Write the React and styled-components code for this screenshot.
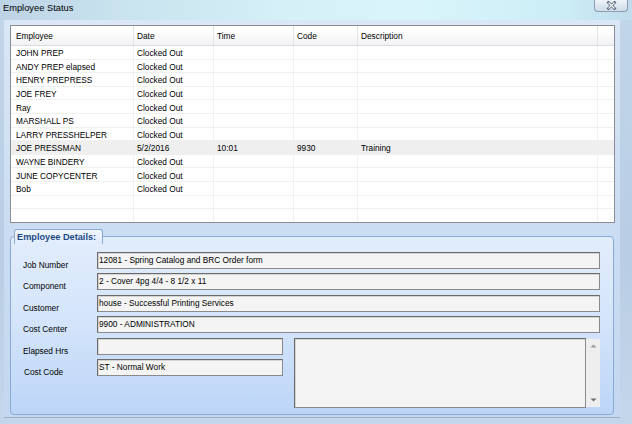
import React from 'react';
import styled, { createGlobalStyle } from 'styled-components';

const GlobalStyle = createGlobalStyle`
  html, body {
    margin: 0;
    padding: 0;
    overflow: hidden;
  }
  body {
    font-family: "Liberation Sans", Arial, sans-serif;
    font-size: 8.3px;
    color: #000;
  }
`;

const columns = [
  { key: 'employee', label: 'Employee', width: 123 },
  { key: 'date', label: 'Date', width: 80 },
  { key: 'time', label: 'Time', width: 80 },
  { key: 'code', label: 'Code', width: 64 },
  { key: 'description', label: 'Description', width: 240 },
];

const rows = [
  { employee: 'JOHN PREP', date: 'Clocked Out' },
  { employee: 'ANDY PREP elapsed', date: 'Clocked Out' },
  { employee: 'HENRY PREPRESS', date: 'Clocked Out' },
  { employee: 'JOE FREY', date: 'Clocked Out' },
  { employee: 'Ray', date: 'Clocked Out' },
  { employee: 'MARSHALL PS', date: 'Clocked Out' },
  { employee: 'LARRY PRESSHELPER', date: 'Clocked Out' },
  { employee: 'JOE PRESSMAN', date: '5/2/2016', time: '10:01', code: '9930', description: 'Training', selected: true },
  { employee: 'WAYNE BINDERY', date: 'Clocked Out' },
  { employee: 'JUNE COPYCENTER', date: 'Clocked Out' },
  { employee: 'Bob', date: 'Clocked Out' },
  {},
  {},
];

const details = [
  { label: 'Job Number', value: '12081 - Spring Catalog and BRC Order form' },
  { label: 'Component', value: '2 - Cover 4pg 4/4 - 8 1/2 x 11' },
  { label: 'Customer', value: 'house - Successful Printing Services' },
  { label: 'Cost Center', value: '9900 - ADMINISTRATION' },
];

const gridTemplate = columns.map(c => `${c.width}px`).join(' ') + ' 16px';

export default function App() {
  return (
    <>
      <GlobalStyle />
      <Window>
        <TitleBar>
          <Title>Employee Status</Title>
          <CloseButton>
            <svg width="11" height="9" viewBox="0 0 11 9">
              <path d="M2.5 1.5 L8.5 7.5 M8.5 1.5 L2.5 7.5" stroke="#56657a" strokeWidth="2.8" strokeLinecap="square" fill="none" />
              <path d="M2.5 1.5 L8.5 7.5 M8.5 1.5 L2.5 7.5" stroke="#ffffff" strokeWidth="1.1" fill="none" />
            </svg>
          </CloseButton>
        </TitleBar>
        <Client>
          <ListView>
            <HeaderRow>
              {columns.map((c, i) => (
                <HeaderCell key={c.key} $first={i === 0}>{c.label}</HeaderCell>
              ))}
              <HeaderCell $filler />
            </HeaderRow>
            {rows.map((r, idx) => (
              <Row key={idx} $selected={r.selected}>
                {columns.map((c, i) => (
                  <Cell key={c.key} $first={i === 0}>{r[c.key] || ''}</Cell>
                ))}
                <Cell $filler />
              </Row>
            ))}
          </ListView>

          <GroupBox>
            <GroupTab>Employee Details:</GroupTab>
            <GroupBody>
              {details.map(d => (
                <FieldRow key={d.label}>
                  <Label>{d.label}</Label>
                  <TextBox>{d.value}</TextBox>
                </FieldRow>
              ))}
              <LowerSection>
                <ShortFields>
                  <FieldRow>
                    <Label>Elapsed Hrs</Label>
                    <TextBox />
                  </FieldRow>
                  <FieldRow>
                    <Label $nudge>Cost Code</Label>
                    <TextBox>ST - Normal Work</TextBox>
                  </FieldRow>
                </ShortFields>
                <Memo>
                  <MemoBox />
                  <ScrollBar>
                    <svg width="7" height="4" viewBox="0 0 7 4">
                      <path d="M0.5 3.5 L3.5 0.5 L6.5 3.5 Z" fill="#9a9a9a" />
                    </svg>
                    <svg width="7" height="4" viewBox="0 0 7 4">
                      <path d="M0.5 0.5 L3.5 3.5 L6.5 0.5 Z" fill="#6a6a6a" />
                    </svg>
                  </ScrollBar>
                </Memo>
              </LowerSection>
            </GroupBody>
          </GroupBox>
        </Client>
      </Window>
    </>
  );
}

const Window = styled.div`
  width: 632px;
  height: 424px;
  display: flex;
  flex-direction: column;
  box-sizing: border-box;
  background: linear-gradient(180deg, #c2d6ea 0%, #b8cde4 60%, #c4d6ea 100%);
  overflow: hidden;
`;

const TitleBar = styled.div`
  height: 20px;
  flex: none;
  display: flex;
  justify-content: space-between;
  align-items: flex-start;
  padding: 0 4px 0 3px;
  box-sizing: border-box;
  background: linear-gradient(90deg, #bdd3e6 0%, #c9e2ee 18%, #d5f0f7 45%, #d9f5fa 65%, #cdeef7 88%, #c0dcec 100%);
`;

const Title = styled.div`
  font-size: 9.3px;
  line-height: 12px;
  padding-top: 2px;
  color: #000;
`;

const CloseButton = styled.div`
  width: 34px;
  height: 13px;
  margin-top: -1px;
  box-sizing: border-box;
  border: 1px solid #8d9db2;
  border-top: none;
  border-radius: 0 0 4px 4px;
  background: linear-gradient(180deg, #f2f6fa 0%, #dfe8f1 50%, #cfdbe7 100%);
  display: flex;
  align-items: center;
  justify-content: center;
`;

const Client = styled.div`
  flex: 1;
  margin: 0 12px 6px 4px;
  padding: 5px 6px 0 6px;
  display: flex;
  flex-direction: column;
  gap: 6px;
  background: linear-gradient(180deg, #d9e7f6 0%, #c9dcf1 55%, #c3d8f0 100%);
  border-bottom: 1px solid #9fb0c4;
`;

const ListView = styled.div`
  width: 605px;
  height: 198px;
  flex: none;
  box-sizing: border-box;
  border: 1px solid #8a8d92;
  background: #fff;
  overflow: hidden;
`;

const HeaderRow = styled.div`
  display: grid;
  grid-template-columns: ${gridTemplate};
  height: 20px;
  box-sizing: border-box;
  border-bottom: 1px solid #dcdcdc;
  background: linear-gradient(180deg, #ffffff 0%, #fbfbfc 45%, #f1f2f4 100%);
`;

const HeaderCell = styled.div`
  display: flex;
  align-items: center;
  padding-left: ${p => (p.$first ? 5 : 3)}px;
  border-right: ${p => (p.$filler ? 'none' : '1px solid #e3e4e6')};
  white-space: nowrap;
  overflow: hidden;
`;

const Row = styled.div`
  display: grid;
  grid-template-columns: ${gridTemplate};
  height: 13.6px;
  box-sizing: border-box;
  border-bottom: 1px solid #f0f0f0;
  background: ${p => (p.$selected ? '#efefef' : '#fff')};
`;

const Cell = styled.div`
  display: flex;
  align-items: center;
  padding-top: 2px;
  padding-left: ${p => (p.$first ? 5 : 3)}px;
  border-right: ${p => (p.$filler ? 'none' : '1px solid #f0f0f0')};
  white-space: nowrap;
  overflow: hidden;
`;

const GroupBox = styled.fieldset`
  width: 604px;
  height: 186px;
  flex: none;
  margin: 0;
  padding: 0;
  box-sizing: border-box;
  border: 1px solid #8aabd6;
  border-radius: 4px;
  background: linear-gradient(180deg, #e2edfc 0%, #d3e4fb 50%, #bcd5f7 100%);
  min-width: 0;
`;

const GroupTab = styled.legend`
  margin-left: 3px;
  padding: 0 3px 0 2px;
  height: 15px;
  width: 89px;
  box-sizing: border-box;
  line-height: 14px;
  font-size: 9.2px;
  font-weight: bold;
  color: #1d4a86;
  border: 1px solid #8aabd6;
  border-bottom: none;
  border-radius: 3px 3px 0 0;
  background: linear-gradient(180deg, #eef5fe 0%, #e0ecfc 100%);
  white-space: nowrap;
`;

const GroupBody = styled.div`
  padding: 8px 13px 0 12px;
  display: flex;
  flex-direction: column;
  gap: 4.4px;
`;

const FieldRow = styled.div`
  display: grid;
  grid-template-columns: 74px 1fr;
  height: 17px;
`;

const Label = styled.div`
  padding-top: 8px;
  padding-left: ${p => (p.$nudge ? 1 : 0)}px;
  line-height: 10px;
  white-space: nowrap;
`;

const TextBox = styled.div`
  box-sizing: border-box;
  height: 17px;
  padding: 0 0 0 1px;
  line-height: 14px;
  background: #f4f4f4;
  border: 1px solid #8a8a8a;
  border-top-color: #6b6b6b;
  border-left-color: #6b6b6b;
  box-shadow: inset 1px 1px 0 #d4d4d4;
  white-space: nowrap;
  overflow: hidden;
`;

const LowerSection = styled.div`
  display: flex;
  gap: 11px;
`;

const ShortFields = styled.div`
  width: 260px;
  flex: none;
  display: flex;
  flex-direction: column;
  gap: 4.4px;
`;

const Memo = styled.div`
  flex: 1;
  height: 70px;
  display: flex;
`;

const MemoBox = styled.div`
  flex: 1;
  box-sizing: border-box;
  background: #f4f4f4;
  border: 1px solid #8a8a8a;
  border-top-color: #6b6b6b;
  border-left-color: #6b6b6b;
  box-shadow: inset 1px 1px 0 #d4d4d4;
`;

const ScrollBar = styled.div`
  width: 14px;
  flex: none;
  box-sizing: border-box;
  margin: 1px 0;
  background: #eeeeee;
  display: flex;
  flex-direction: column;
  justify-content: space-between;
  align-items: center;
  padding: 5px 0 5px 1px;
`;
